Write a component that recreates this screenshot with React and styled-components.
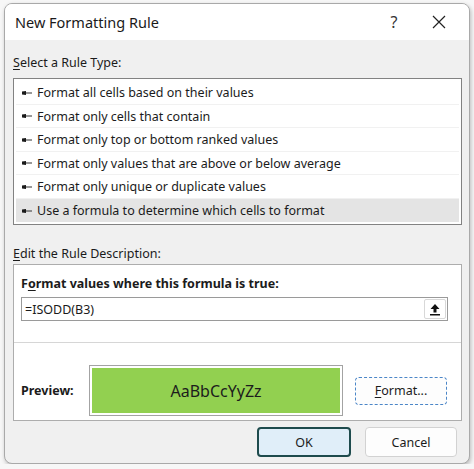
import React from "react"
import styled, { createGlobalStyle } from "styled-components"

const GlobalStyle = createGlobalStyle`
  html, body {
    margin: 0;
    padding: 0;
    background: #f7f7f7;
  }
  body {
    font-family: "Noto Sans", "Open Sans", sans-serif;
    color: #1b1b1b;
  }
`

const rules = [
  "Format all cells based on their values",
  "Format only cells that contain",
  "Format only top or bottom ranked values",
  "Format only values that are above or below average",
  "Format only unique or duplicate values",
  "Use a formula to determine which cells to format",
]

const Window = styled.div`
  box-sizing: border-box;
  margin: 3px 0 0 4px;
  width: 466px;
  height: 461px;
  border: 1px solid #a9a9a9;
  border-radius: 8px;
  overflow: hidden;
  background: #f0f0f0;
  box-shadow: 1px 2px 4px rgba(0, 0, 0, 0.25);
  display: flex;
  flex-direction: column;
`

const TitleBar = styled.div`
  height: 36px;
  flex-shrink: 0;
  background: #ffffff;
  display: flex;
  align-items: center;
  padding-left: 10px;
`

const Title = styled.div`
  flex: 1;
  font-size: 14.5px;
  color: #1a1a1a;
`

const TitleButton = styled.div`
  width: ${p => p.w}px;
  display: flex;
  justify-content: center;
  align-items: center;
  font-size: 16px;
  color: #333;
`

const Body = styled.div`
  flex: 1;
  display: flex;
  flex-direction: column;
  padding: 14px 7px 0 8px;
`

const Label = styled.div`
  font-size: 12.5px;
  line-height: 18px;
  margin-bottom: ${p => p.mb}px;
  margin-top: ${p => p.mt || 0}px;
`

const Key = styled.span`
  text-decoration: underline;
  text-underline-offset: 2px;
`

const ListBox = styled.div`
  box-sizing: border-box;
  height: 147px;
  border: 1px solid #828282;
  background: #ffffff;
  padding: 2px;
  display: flex;
  flex-direction: column;
`

const Row = styled.div`
  height: 23.5px;
  flex-shrink: 0;
  box-sizing: border-box;
  display: flex;
  align-items: center;
  gap: 5px;
  padding: 1px 0 0 6px;
  font-size: 12.5px;
  background: ${p => (p.selected ? "#e4e4e4" : "transparent")};
  border-bottom: ${p => (p.last ? "none" : "1px solid #f1f1f1")};
`

const Pointer = () => (
  <svg width="10" height="6" viewBox="0 0 10 6">
    <polygon points="0,1.5 4,1 4,5 0,4.5" fill="#1a1a1a" />
    <rect x="4" y="2.5" width="6" height="1" fill="#333" />
  </svg>
)

const DescBox = styled.div`
  box-sizing: border-box;
  height: 157px;
  border: 1px solid #adadad;
  background: #ffffff;
  display: flex;
  flex-direction: column;
`

const DescTop = styled.div`
  padding: 10px 13px 0 7px;
  height: 78px;
  flex-shrink: 0;
  box-sizing: border-box;
  border-bottom: 1px solid #d6d6d6;
`

const Bold = styled.div`
  font-weight: 700;
  font-size: 12.5px;
  line-height: 18px;
`

const Input = styled.div`
  margin-top: 4px;
  height: 24px;
  box-sizing: border-box;
  border: 1px solid #9a9a9a;
  display: flex;
  align-items: center;
  padding: 0 1px 0 3px;
  font-size: 12.5px;
`

const InputText = styled.div`
  flex: 1;
`

const CollapseButton = styled.div`
  width: 22px;
  height: 20px;
  box-sizing: border-box;
  border: 1px solid #d8d8d8;
  border-radius: 2px;
  display: flex;
  align-items: center;
  justify-content: center;
`

const PreviewRow = styled.div`
  flex: 1;
  display: flex;
  align-items: center;
  padding: 22px 14px 5px 7px;
`

const PreviewLabel = styled(Bold)`
  width: 68px;
`

const PreviewFrame = styled.div`
  box-sizing: border-box;
  width: 254px;
  height: 51px;
  border: 1px solid #a3a3a3;
  padding: 2px;
`

const PreviewFill = styled.div`
  height: 100%;
  background: #92d050;
  display: flex;
  align-items: center;
  justify-content: center;
  font-size: 16px;
  color: #1c1c1c;
`

const Button = styled.div`
  box-sizing: border-box;
  width: ${p => p.w}px;
  height: ${p => p.h}px;
  display: flex;
  align-items: center;
  justify-content: center;
  font-size: 12.5px;
  border-radius: 4px;
  background: ${p => (p.primary ? "#e0eef9" : "#fdfdfd")};
  border: ${p =>
    p.primary ? "2px solid #1e4b4d" : p.focus ? "1px dashed #4b86c8" : "1px solid #d2d2d2"};
  margin-left: ${p => p.ml || 0}px;
`

const Footer = styled.div`
  display: flex;
  justify-content: flex-end;
  padding: 6px 5px 0 0;
`

const App = () => (
  <>
    <GlobalStyle />
    <Window>
      <TitleBar>
        <Title>New Formatting Rule</Title>
        <TitleButton w={30}>?</TitleButton>
        <TitleButton w={60}>
          <svg width="14" height="14" viewBox="0 0 14 14">
            <path d="M1 1 L13 13 M13 1 L1 13" stroke="#222" strokeWidth="1.2" />
          </svg>
        </TitleButton>
      </TitleBar>
      <Body>
        <Label mb={6}>
          <Key>S</Key>elect a Rule Type:
        </Label>
        <ListBox>
          {rules.map((r, i) => (
            <Row key={i} selected={i === 5} last={i === 5}>
              <Pointer />
              {r}
            </Row>
          ))}
        </ListBox>
        <Label mt={20} mb={1}>
          <Key>E</Key>dit the Rule Description:
        </Label>
        <DescBox>
          <DescTop>
            <Bold>
              F<Key>o</Key>rmat values where this formula is true:
            </Bold>
            <Input>
              <InputText>=ISODD(B3)</InputText>
              <CollapseButton>
                <svg width="12" height="13" viewBox="0 0 12 13">
                  <path d="M6 1 L10.5 6 L7.5 6 L7.5 9.5 L4.5 9.5 L4.5 6 L1.5 6 Z" fill="#111" />
                  <rect x="1" y="11" width="10" height="1.5" fill="#111" />
                </svg>
              </CollapseButton>
            </Input>
          </DescTop>
          <PreviewRow>
            <PreviewLabel>Preview:</PreviewLabel>
            <PreviewFrame>
              <PreviewFill>AaBbCcYyZz</PreviewFill>
            </PreviewFrame>
            <Button w={92} h={28} ml={12} focus>
              <span>
                <Key>F</Key>ormat...
              </span>
            </Button>
          </PreviewRow>
        </DescBox>
        <Footer>
          <Button w={94} h={30} primary>
            OK
          </Button>
          <Button w={92} h={30} ml={14}>
            Cancel
          </Button>
        </Footer>
      </Body>
    </Window>
  </>
)

export default App
